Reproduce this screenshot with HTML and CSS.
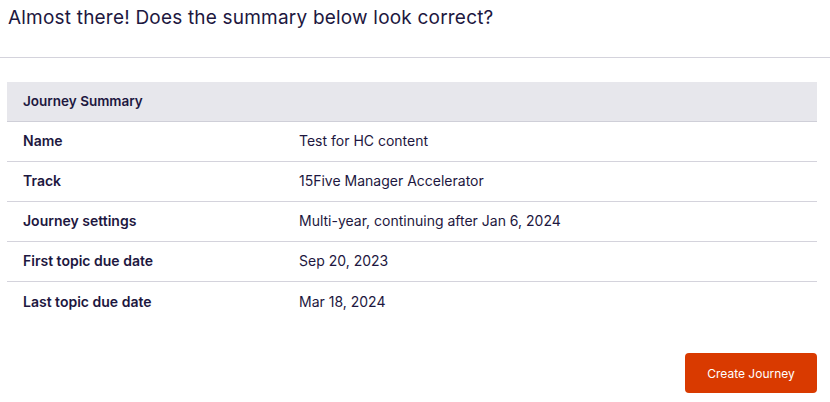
FILE: index.html
```html
<!DOCTYPE html>
<html>
<head>
<meta charset="utf-8">
<link rel="stylesheet" href="styles.css">
</head>
<body>
<div class="page">
  <div class="top">
    <h1 class="title">Almost there! Does the summary below look correct?</h1>
  </div>
  <div class="content">
    <div class="summary">
      <div class="summary-head">Journey Summary</div>
      <div class="row"><div class="label">Name</div><div class="value">Test for HC content</div></div>
      <div class="row"><div class="label">Track</div><div class="value">15Five Manager Accelerator</div></div>
      <div class="row"><div class="label">Journey settings</div><div class="value">Multi-year, continuing after Jan 6, 2024</div></div>
      <div class="row"><div class="label">First topic due date</div><div class="value">Sep 20, 2023</div></div>
      <div class="row last"><div class="label">Last topic due date</div><div class="value">Mar 18, 2024</div></div>
    </div>
    <div class="actions">
      <button class="btn">Create Journey</button>
    </div>
  </div>
</div>
</body>
</html>
```

FILE: styles.css
```css
* { box-sizing: border-box; }
html, body { margin: 0; padding: 0; background: #fff; }
body {
  font-family: Inter, "Noto Sans", sans-serif;
  color: #1d1740;
}
.top {
  height: 58px;
  border-bottom: 1px solid #d4d3dc;
  padding: 5px 8px 0;
}
.title {
  margin: 0;
  font-size: 19px;
  font-weight: 400;
  line-height: 26px;
  letter-spacing: 0.2px;
}
.content {
  padding: 24px 13px 0 7px;
}
.summary {
  width: 810px;
}
.summary-head {
  height: 40px;
  background: #e7e7ec;
  border-bottom: 1px solid #cfcfd8;
  display: flex;
  align-items: center;
  padding-left: 16px;
  padding-bottom: 1px;
  font-size: 13.5px;
  font-weight: 600;
}
.row {
  display: grid;
  grid-template-columns: 276px 1fr;
  height: 40px;
  align-items: center;
  border-bottom: 1px solid #d4d3dc;
  font-size: 14px;
  padding-left: 16px;
  padding-bottom: 2px;
}
.row.last { border-bottom: none; }
.label { font-weight: 600; font-size: 14px; }
.value { font-weight: 400; }
.actions {
  display: flex;
  justify-content: flex-end;
  width: 810px;
  margin-top: 31px;
}
.btn {
  width: 132px;
  height: 40px;
  border: none;
  border-radius: 4px;
  background: #d93a00;
  color: #fff;
  font-family: Inter, "Noto Sans", sans-serif;
  font-size: 12px;
}
```
